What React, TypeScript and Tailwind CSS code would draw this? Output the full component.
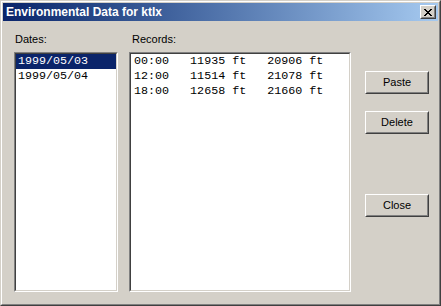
const dates = ["1999/05/03", "1999/05/04"];

const records = [
  "00:00   11935 ft   20906 ft",
  "12:00   11514 ft   21078 ft",
  "18:00   12658 ft   21660 ft",
];

function Sunken({ className, children }: { className: string; children: React.ReactNode }) {
  return (
    <div className={`border border-t-[#808080] border-l-[#808080] border-r-white border-b-white ${className}`}>
      <div className="h-full border border-t-[#404040] border-l-[#404040] border-r-[#d4d0c8] border-b-[#d4d0c8] bg-white">
        {children}
      </div>
    </div>
  );
}

function Button({ label, className = "" }: { label: string; className?: string }) {
  return (
    <button
      className={`w-[64px] h-[23px] border border-t-white border-l-white border-r-[#404040] border-b-[#404040] bg-[#d4d0c8] ${className}`}
    >
      <div className="h-full flex items-center justify-center border border-transparent border-r-[#808080] border-b-[#808080] text-[11px] text-black">
        {label}
      </div>
    </button>
  );
}

export default function App() {
  return (
    <div
      className="w-[441px] h-[306px] border border-t-[#d4d0c8] border-l-[#d4d0c8] border-r-[#404040] border-b-[#404040] bg-[#d4d0c8]"
      style={{ fontFamily: '"Liberation Sans", Arial, sans-serif' }}
    >
      <div className="h-full flex flex-col p-px border border-t-white border-l-white border-r-[#808080] border-b-[#808080]">
        {/* title bar */}
        <div className="h-[18px] flex items-center justify-between pl-[3px] pr-[2px] bg-gradient-to-r from-[#0a246a] to-[#a6caf0]">
          <span className="text-[12px] font-bold text-white leading-none">Environmental Data for ktlx</span>
          <div className="w-[16px] h-[14px] border border-t-white border-l-white border-r-[#404040] border-b-[#404040] bg-[#d4d0c8]">
            <div className="h-full flex items-center justify-center border border-transparent border-r-[#808080] border-b-[#808080]">
              <svg width="8" height="7" viewBox="0 0 8 7" shapeRendering="crispEdges">
                <path
                  d="M0 0h2v1h-2zM6 0h2v1h-2zM1 1h2v1h-2zM5 1h2v1h-2zM2 2h4v1h-4zM3 3h2v1h-2zM2 4h4v1h-4zM1 5h2v1h-2zM5 5h2v1h-2zM0 6h2v1h-2zM6 6h2v1h-2z"
                  fill="#000"
                />
              </svg>
            </div>
          </div>
        </div>

        {/* client area */}
        <div className="flex pt-[12px] pl-[11px] text-[11px] text-black">
          <div className="w-[104px] flex flex-col">
            <div className="h-[13px] leading-[13px] pl-px">Dates:</div>
            <Sunken className="mt-[6px] h-[240px]">
              <div className="font-['Liberation_Mono',monospace] text-[11.7px] leading-[15px]">
                {dates.map((d, i) => (
                  <div key={d} className={`pl-[2px] ${i === 0 ? "bg-[#0a246a] text-white" : "text-black"}`}>
                    {d}
                  </div>
                ))}
              </div>
            </Sunken>
          </div>

          <div className="w-[222px] ml-[11px] flex flex-col">
            <div className="h-[13px] leading-[13px] pl-[3px]">Records:</div>
            <Sunken className="mt-[6px] h-[240px]">
              <div className="font-['Liberation_Mono',monospace] text-[11.7px] leading-[15px] pl-[3px] whitespace-pre">
                {records.map((r) => (
                  <div key={r}>{r}</div>
                ))}
              </div>
            </Sunken>
          </div>

          <div className="ml-[14px] pt-[38px] flex flex-col">
            <Button label="Paste" />
            <Button label="Delete" className="mt-[17px]" />
            <Button label="Close" className="mt-[60px]" />
          </div>
        </div>
      </div>
    </div>
  );
}
